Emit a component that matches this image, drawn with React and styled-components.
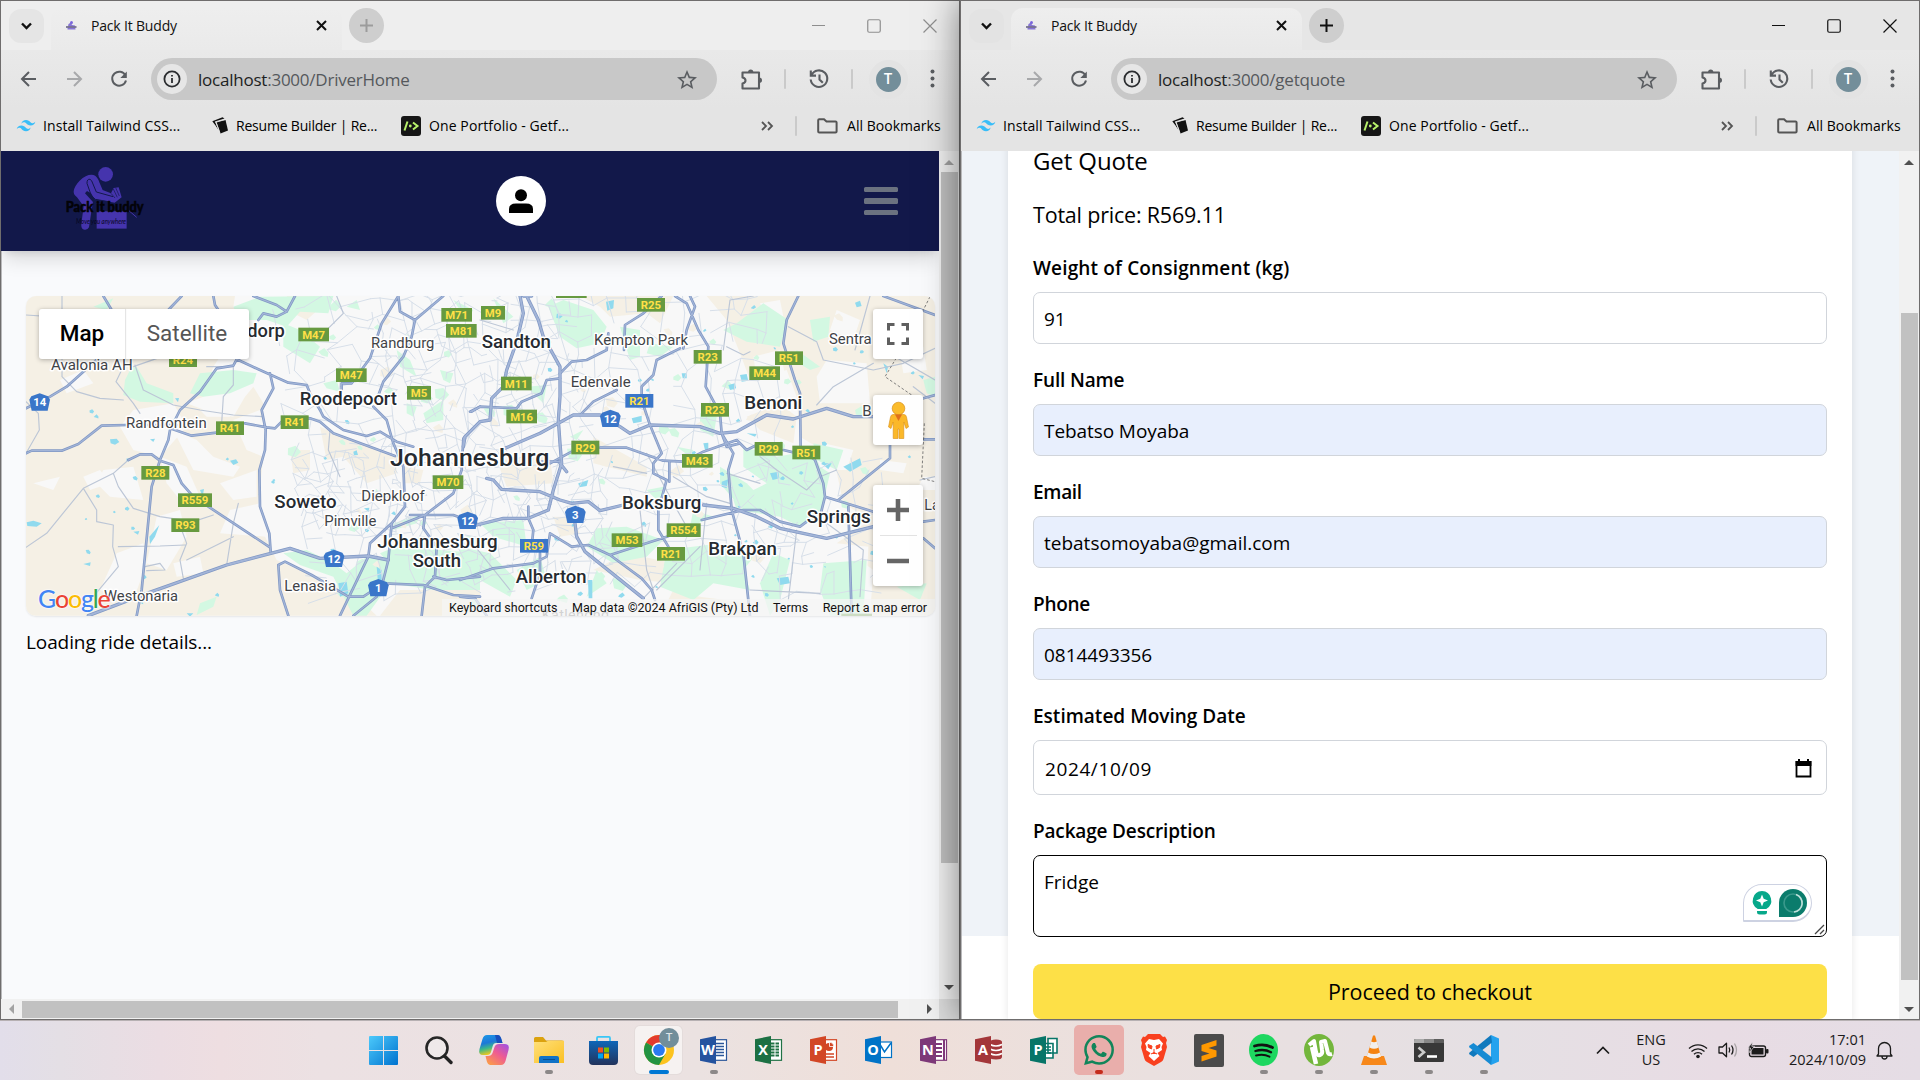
import React from "react";
import styled, { createGlobalStyle, css } from "styled-components";

const UI = `"Open Sans", "Noto Sans", sans-serif`;
const ROBOTO = `Roboto, "Liberation Sans", sans-serif`;

const GlobalStyle = createGlobalStyle`
  *, *::before, *::after { box-sizing: border-box; }
  body { margin: 0; background: #e6dfe2; font-family: ${UI}; color: #000; overflow: hidden; }
  h1, p { margin: 0; }
  svg { display: block; flex: none; overflow: visible; }
`;

/* ---------- desktop ---------- */
const Desktop = styled.div`
  width: 1920px; height: 1080px; display: flex; flex-direction: column; overflow: hidden;
`;
const Windows = styled.div`
  display: flex; height: 1020px; overflow: hidden;
`;
const WindowFrame = styled.section`
  position: relative;
  z-index: ${(p) => (p.$active ? 2 : 1)};
  width: 960px; height: 1020px;
  display: flex; flex-direction: column;
  border: 1px solid #6f6d6d;
  background: #e5e5e5;
  box-shadow: ${(p) => (p.$active ? "0 0 34px rgba(0,0,0,.5)" : "none")};
`;
const TabStrip = styled.div`
  display: flex; align-items: center; height: 49px; flex: none;
  padding: 0 22px 0 8px;
  background: ${(p) => (p.$active ? "#e6e6e6" : "#eeeeee")};
`;
const TabSearch = styled.div`
  width: 35px; height: 34px; border-radius: 12px; margin-right: 7px;
  display: flex; align-items: center; justify-content: center;
  background: ${(p) => (p.$active ? "#e3e3e3" : "#e5e5e5")};
`;
const Tab = styled.div`
  align-self: flex-end; width: 291px; height: 42px; padding: 0 15px 8px 15px;
  display: flex; align-items: center; border-radius: 12px 12px 0 0;
  background: ${(p) => (p.$active ? "linear-gradient(#eeeeee,#e9e9e9)" : "linear-gradient(#eeeeee,#eaeaea)")};
`;
const TabTitle = styled.span`
  flex: 1; margin-left: 14px; padding-top: 1px; font-size: 14px; letter-spacing: -0.18px; line-height: 20px; color: #111;
`;
const NewTab = styled.div`
  width: 35px; height: 35px; border-radius: 50%; margin-left: 7px;
  display: flex; align-items: center; justify-content: center;
  background: #cecece; color: ${(p) => (p.$active ? "#111" : "#9c9c9c")};
`;
const Controls = styled.div`
  margin-left: auto; display: flex; align-items: center; gap: 42px;
  color: ${(p) => (p.$active ? "#111" : "#8e8e8e")};
`;
const Toolbar = styled.div`
  display: flex; align-items: center; height: 58px; flex: none; padding: 0 18px 0 16px;
  background: linear-gradient(#e9e9e9, #e4e4e4); color: #5a5d61;
`;
const NavButtons = styled.div`
  display: flex; gap: 21px; margin-right: 20px;
`;
const AddressBar = styled.div`
  width: 566px; height: 42px; border-radius: 21px; background: #c8c8c8;
  display: flex; align-items: center; padding: 0 20px 0 6px;
`;
const SiteInfo = styled.div`
  width: 30px; height: 30px; border-radius: 50%; background: #e6e6e6;
  display: flex; align-items: center; justify-content: center; margin-right: 11px;
`;
const Url = styled.span`
  flex: 1; padding-top: 2px; font-size: 17px; line-height: 26px; letter-spacing: -0.23px; color: #55585c;
  b { font-weight: 400; color: #1d1f22; }
`;
const Divider = styled.span`
  width: 2px; height: 20px; border-radius: 1px; background: #cacaca; flex: none;
`;
const ToolGroup = styled.div`
  flex: 1; display: flex; align-items: center; justify-content: space-between; padding-left: 24px;
`;
const Profile = styled.span`
  width: 25px; height: 25px; border-radius: 50%; background: #738e9a; color: #fff;
  box-shadow: 0 0 0 7px #e3e3e3; font: 500 14px/25px ${ROBOTO}; text-align: center;
`;
const BookmarkBar = styled.div`
  display: flex; align-items: center; height: 43px; flex: none; padding: 0 16px 8px 15px; background: #e4e4e4;
  font-size: 14px; line-height: 20px; color: #000;
`;
const Bookmark = styled.span`
  display: flex; align-items: center; gap: ${(p) => p.$gap || 8}px; width: ${(p) => p.$w}px; white-space: nowrap;
  letter-spacing: ${(p) => p.$ls || "-0.2px"};
`;
const BookmarkEnd = styled.div`
  margin-left: auto; display: flex; align-items: center;
`;
const Spacer = styled.span`width: ${(p) => p.$w}px; flex: none;`;
const Viewport = styled.div`
  flex: 1; min-height: 0; display: grid; grid-template-columns: minmax(0, 1fr) 20px;
  grid-template-rows: ${(p) => (p.$both ? "minmax(0, 1fr) 20px" : "minmax(0, 1fr)")};
`;

/* ---------- scrollbars ---------- */
const VTrack = styled.div`
  background: #f1f1f1; display: flex; flex-direction: column; align-items: center;
  padding: 9px 0 ${(p) => p.$pb}px; justify-content: space-between;
`;
const VRail = styled.div`flex: 1; width: 17px; margin: ${(p) => p.$top}px 0 0 1px;`;
const VThumb = styled.div`height: ${(p) => p.$h}px; background: #c1c1c1;`;
const HTrack = styled.div`
  background: #f1f1f1; display: flex; align-items: center; padding: 0 7px 0 8px;
`;
const HRail = styled.div`flex: 1; height: 17px; margin-left: 8px;`;
const HThumb = styled.div`width: 876px; height: 17px; background: #c1c1c1;`;
const Corner = styled.div`background: #dcdcdc;`;
const Arrow = styled.i`
  width: 0; height: 0; border: 5px solid transparent; flex: none;
  ${(p) => p.$dir === "up" && css`border-top: 0; border-bottom-color: ${p.$c};`}
  ${(p) => p.$dir === "down" && css`border-bottom: 0; border-top-color: ${p.$c};`}
  ${(p) => p.$dir === "left" && css`border-left: 0; border-right-color: ${p.$c};`}
  ${(p) => p.$dir === "right" && css`border-right: 0; border-left-color: ${p.$c};`}
`;

/* ---------- driver page ---------- */
const DriverPage = styled.main`
  background: #f9fafc; overflow: hidden; display: flex; flex-direction: column;
`;
const Navbar = styled.header`
  height: 100px; flex: none; background: #12184a; padding: 0 41px 0 62px;
  display: flex; align-items: center; justify-content: space-between;
  box-shadow: 0 12px 18px -3px rgba(0,0,0,.12), 0 5px 8px -4px rgba(0,0,0,.12);
`;
const LogoLink = styled.div`width: 115px; padding-bottom: 6px;`;
const UserBadge = styled.div`
  width: 50px; height: 50px; border-radius: 50%; background: #fff; display: flex; align-items: center; justify-content: center;
`;
const Burger = styled.div`
  width: 34px; display: flex; flex-direction: column; gap: 6px;
  span { height: 5.6px; border-radius: 1.5px; background: #6b7280; }
`;
const DriverBody = styled.div`flex: 1; border-left: 1px solid #b9b9bb; padding: 45px 3px 0 24px;`;
const MapCard = styled.div`
  position: relative; width: 909px; height: 320px; border-radius: 10px; overflow: hidden; background: #f8f8f8;
  font-family: ${ROBOTO}; box-shadow: 0 1px 2px rgba(0,0,0,.08);
`;
const MapType = styled.div`
  position: absolute; left: 13px; top: 13px; height: 50px; display: flex; background: #fff; border-radius: 3px;
  box-shadow: 0 1px 5px rgba(0,0,0,.28); font-size: 22.5px; line-height: 49px; text-align: center;
`;
const MapTypeItem = styled.span`
  width: ${(p) => (p.$on ? 86 : 124)}px; color: ${(p) => (p.$on ? "#000" : "#565656")};
  font-weight: ${(p) => (p.$on ? 500 : 400)};
  box-shadow: ${(p) => (p.$on ? "1px 0 1px rgba(0,0,0,.1)" : "none")};
`;
const MapButton = styled.div`
  position: absolute; left: 847px; top: ${(p) => p.$top}px; width: 50px; height: ${(p) => p.$h || 50}px; background: #fff;
  border-radius: 3px; box-shadow: 0 1px 5px rgba(0,0,0,.28); display: flex; flex-direction: column; align-items: center; justify-content: space-evenly;
`;
const Rule = styled.span`width: 37px; height: 1px; background: #e3e3e3;`;
const GoogleMark = styled.div`
  position: absolute; left: 12px; top: 285px; font: 500 25px/34px Lato, sans-serif; letter-spacing: -1.2px;
  text-shadow: 0 0 2px #fff, 0 0 2px #fff;
`;
const Ink = styled.span`color: ${(p) => p.$c};`;
const Attribution = styled.div`
  position: absolute; right: 0; bottom: 0; height: 17px; width: 493px; padding: 0 8px 0 7px;
  display: flex; justify-content: space-between; background: rgba(245,245,245,.72);
  font-size: 12.5px; line-height: 18px; color: #111; white-space: nowrap;
`;
const Loading = styled.p`
  margin-top: 12px; font-size: 19px; line-height: 28px; letter-spacing: -0.1px;
`;

/* ---------- quote page ---------- */
const QuotePage = styled.main`
  border-left: 1px solid #b9b9bb; overflow: hidden; padding: 0 47px 0 46px;
  background: linear-gradient(#eff3f8 0 785px, #fff 785px);
`;
const Card = styled.form`
  height: 880px; margin: -10px 0 0; padding: 0 25px; background: #fff; box-shadow: 0 0 8px rgba(0,0,0,.1);
`;
const Title = styled.h1`font-size: 24px; line-height: 40px; font-weight: 400; letter-spacing: -0.1px;`;
const Price = styled.p`margin: 19px 0 23px; font-size: 21.5px; line-height: 30px; letter-spacing: -0.2px;`;
const Label = styled.label`
  display: block; margin: 0 0 9px; font-size: 19px; line-height: 30px; font-weight: 600; letter-spacing: ${(p) => p.$ls || "-0.3px"};
`;
const Field = styled.div`
  position: relative; height: ${(p) => p.$h || 52}px; margin-bottom: ${(p) => p.$mb || 21}px; padding: ${(p) => (p.$area ? 11 : 12)}px 10px 10px ${(p) => p.$pl || 10}px;
  display: flex; justify-content: space-between; align-items: ${(p) => (p.$area ? "flex-start" : "center")};
  border: 1px solid ${(p) => (p.$area ? "#000" : "#d1d5db")}; border-radius: 7px; background: ${(p) => (p.$filled ? "#e8effd" : "#fff")};
  font-size: 19px; line-height: 30px; letter-spacing: ${(p) => p.$ls || "0"};
`;
const Checkout = styled.div`
  height: 55px; border-radius: 8px; background: #fde047; text-align: center; font-size: 21.5px; line-height: 55px; letter-spacing: -0.05px;
`;
const Assistant = styled.div`
  position: absolute; right: 14px; top: 28px; width: 69px; height: 38px; border: 1px solid #cdd2e2; border-bottom-width: 2px;
  border-radius: 19px 19px 19px 1px; background: #fff; display: flex; align-items: center; justify-content: space-between; padding: 0 4px 0 8px;
`;
const Grip = styled.div`position: absolute; right: 1px; bottom: 1px;`;

/* ---------- taskbar ---------- */
const Taskbar = styled.footer`
  position: relative; z-index: 3; height: 60px; display: flex; align-items: center; border-top: 1px solid #b7b1b3; padding-bottom: 1px;
  background: linear-gradient(90deg, #e2deea 0, #e4dfe5 60px, #ebdde3 160px, #eedee1 220px, #ece1e3 320px, #ebe2e1 700px, #efdfd9 890px, #eae0df 1150px, #e5e0e4 1500px, #e8dce4 1720px, #e5dde5 1920px);
`;
const Apps = styled.div`margin-left: 356px; display: flex;`;
const Slot = styled.div`
  width: 55px; height: 50px; display: flex; align-items: center; justify-content: center; position: relative;
`;
const Tile = styled.div`
  width: ${(p) => (p.$alert ? 50 : 47)}px; height: ${(p) => (p.$alert ? 50 : 48)}px; border-radius: 5px;
  display: flex; align-items: center; justify-content: center;
  background: ${(p) => (p.$alert ? "#e9aeab" : "#f6f2f1")};
  box-shadow: ${(p) => (p.$alert ? "none" : "0 0 0 1px #e4dcdb")};
`;
const Running = styled.i`
  position: absolute; bottom: 1px; height: 4px; border-radius: 2px; width: ${(p) => p.$w || 8}px; background: ${(p) => p.$c || "#8c8888"};
`;
const Badge = styled.span`
  position: absolute; left: 28px; top: 3px; width: 20px; height: 20px; border-radius: 50%; background: #728e9a; color: #dfe6e9;
  font: 500 11px/20px ${ROBOTO}; text-align: center;
`;
const Tray = styled.div`
  margin-left: auto; display: flex; align-items: center; padding-right: 27px; font-size: 14.5px; line-height: 20px; color: #1b1b1b;
`;
const TrayText = styled.div`
  width: ${(p) => p.$w}px; margin-left: ${(p) => p.$ml || 0}px; text-align: ${(p) => p.$align}; letter-spacing: ${(p) => p.$ls}; white-space: nowrap;
`;

/* ---------- icons ---------- */
const S = ({ w, h, vb, children, ...rest }) => (
  <svg width={w} height={h ?? w} viewBox={vb ?? `0 0 ${w} ${h ?? w}`} fill="none" {...rest}>{children}</svg>
);
const line = { stroke: "currentColor", strokeWidth: 2, fill: "none" };

const Favicon = () => (
  <S w={11} h={10} vb="0 -1.500 11 10"><path d="M1.500 7 2.500 2.500 5 1 6 3.500 9 4 9.500 8 1.500 8Z" fill="#8674d6" /><path d="M0 4.600H10.500V6.400H0Z" fill="#77728f" /><circle cx="5.500" cy="1" r="1.500" fill="#7a66dd" /></S>
);
const TailwindIcon = () => (
  <S w={20} h={13} vb="0 3.6 24 16.8"><path fill="#38bdf8" d="M12 4.8c-3.2 0-5.2 1.6-6 4.8 1.2-1.6 2.6-2.2 4.2-1.8.9.2 1.6.9 2.3 1.7 1.2 1.2 2.6 2.6 5.5 2.6 3.2 0 5.2-1.6 6-4.8-1.2 1.6-2.6 2.2-4.2 1.8-.9-.2-1.6-.9-2.3-1.7C16.300 6.200 14.900 4.800 12 4.800ZM6 12c-3.200 0-5.200 1.600-6 4.800 1.200-1.600 2.600-2.200 4.200-1.800.9.200 1.600.9 2.300 1.700 1.200 1.200 2.600 2.600 5.500 2.600 3.200 0 5.200-1.600 6-4.800-1.200 1.600-2.600 2.200-4.200 1.800-.9-.2-1.600-.9-2.300-1.700C10.300 13.400 8.900 12 6 12Z" /></S>
);
const ResumeIcon = () => (
  <S w={16} h={17}><path d="M4.500 5 13.500 3 16 13.500 8.500 16.500Z" fill="#111" /><path d="M0.300 4.200 10.500 0.300 12.500 1.500 3 4.600 6.500 13 3.500 8.500Z" fill="#111" /><path d="M3.700 5.300 13 2.600M3.700 4.800 7.800 15.500" stroke="#e4e4e4" strokeWidth=".8" /></S>
);
const PortfolioIcon = () => (
  <S w={20}><rect width="20" height="20" rx="3" fill="#161616" /><path d="M6.500 5.500 3.500 14.500" stroke="#b9f36b" strokeWidth="2" /><circle cx="9.300" cy="10" r="1.400" fill="#b9f36b" /><path d="M12 6.500 16.500 10 12 13.500" stroke="#b9f36b" strokeWidth="2" /></S>
);
const PuzzleIcon = () => (
  <S w={21} h={21}><path {...line} strokeWidth="2.100" strokeLinejoin="round" d="M1.500 3.500H18V19.500H1.500V14.500C5.500 13.500 5.500 9.500 1.500 8.500Z" /><path d="M7 3.500a2.700 3 0 0 1 5.400 0ZM18 8.600a3 2.700 0 0 1 0 5.400Z" fill="currentColor" /></S>
);
const HistoryIcon = () => (
  <S w={20}><path {...line} strokeWidth="2.100" d="M2.500 6A8.300 8.300 0 1 1 1.700 10.500M1.800 1.500V6.600H7M10.500 5.500V10.500L13.800 13.800" /></S>
);
const StarIcon = () => (
  <S w={20} h={19} vb="2 2 20 19"><path fill="currentColor" d="M22 9.240l-7.190-.62L12 2 9.190 8.630 2 9.240l5.460 4.730L5.820 21 12 17.270 18.180 21l-1.630-7.030L22 9.240zM12 15.400l-3.760 2.270 1-4.280-3.320-2.880 4.380-.38L12 6.100l1.710 4.040 4.380.38-3.320 2.880 1 4.280L12 15.400z" /></S>
);
const FolderIcon = () => (
  <S w={21} h={16}><path d="M1.200 13.500V2.200Q1.200 1.200 2.200 1.200H7L9.500 3.500H18.500Q19.600 3.500 19.600 4.500V13.500Q19.600 14.600 18.500 14.600H2.300Q1.200 14.600 1.200 13.500Z" stroke="#555" strokeWidth="2" /></S>
);

const PackLogo = () => (
  <S w={83.300} h={68.300} vb="190 490 250 205">
    <g fill="#4534ad">
      <circle cx="318" cy="521" r="22" />
      <path d="M222 572Q224 556 240 540Q262 519 282 523Q294 528 299 545L309 568L334 578L342 562L357 560L366 590L345 606L322 602L285 596L274 578L262 571L256 578L280 604L274 640L268 680Q264 688 255 687Q243 686 245 670L252 617L232 590Q221 582 222 572Z" />
      <path d="M291 632H381V684H291Z" />
      <path d="M388 630 411 650" stroke="#4534ad" strokeWidth="3" />
    </g>
    <path d="M262 548Q262 534 271 536Q276 537 280 550L290 574L340 588M262 548L275 585L287 596L326 603" stroke="#12184a" strokeWidth="3" />
    <path d="M334 578 346 592M341 565 353 590M348 561 359 586" stroke="#12184a" strokeWidth="2" />
    <text x="198" y="634" fontFamily="Lato, sans-serif" fontWeight="900" fontSize="43" textLength="234" lengthAdjust="spacingAndGlyphs" fill="#030308" stroke="#030308" strokeWidth="1.500">Pack it buddy</text>
    <text x="229" y="669" fontFamily="Lato, sans-serif" fontStyle="italic" fontSize="20" textLength="150" lengthAdjust="spacingAndGlyphs" fill="#05061a">Move you anywhere</text>
  </S>
);

const Office = ({ c, dark, letter, kind }) => (
  <S w={27} h={28}>
    {kind === "mail" ? (
      <><rect x="13" y="6" width="13.500" height="15.500" fill="#fff" stroke={c} strokeWidth="1.200" /><path d="M15 8.500 19.500 16 26 7" stroke={c} strokeWidth="1.500" /></>
    ) : kind === "db" ? (
      <path d="M15 6q0-2.500 6-2.500t6 2.500V21q0 2.500-6 2.500T15 21Z" fill={c} />
    ) : kind === "pub" ? (
      <><path d="M18 2.500H27V17H18ZM14 7.500H23V22H14Z" fill="#fff" stroke={c} strokeWidth="1.600" /></>
    ) : (
      <rect x="12" y="3.700" width="14.500" height="20.600" fill="#fff" stroke={c} strokeWidth="1.200" />
    )}
    {kind === "lines" && <path d="M16 7.500h8M16 10.500h8M16 13.500h8M16 16.500h8M16 19.500h8" stroke={c} strokeWidth="1.500" />}
    {kind === "grid" && <path d="M16 7.500h8M16 10.500h8M16 13.500h8M16 16.500h8M16 19.500h8" stroke={c} strokeWidth="2" />}
    {kind === "grid" && <path d="M20 5v18" stroke="#fff" strokeWidth="1" />}
    {kind === "pie" && <><circle cx="19" cy="11" r="4" fill={c} /><path d="M19.500 10.500V6a5 5 0 0 1 4.500 4.500Z" fill={c} stroke="#fff" strokeWidth=".8" /><path d="M16 18h8M16 21h8" stroke={c} strokeWidth="1.400" /></>}
    {kind === "note" && <path d="M16 8h6M16 12h6M16 16h6M16 20h6M24 4v20" stroke={c} strokeWidth="2" />}
    {kind === "db" && <path d="M15 8.500q6 3 12 0M15 13q6 3 12 0M15 17.500q6 3 12 0" stroke="#fff" strokeWidth="1.500" />}
    {kind === "pub" && <path d="M16 11h5M16 14h5M16 17h5" stroke={c} strokeWidth="1.300" />}
    <path d="M0 3.200 16 0V28L0 24.800Z" fill={dark} />
    <text x="8" y="19.300" textAnchor="middle" fontFamily="Open Sans, sans-serif" fontWeight="700" fontSize="14.500" fill="#fff">{letter}</text>
  </S>
);

const WindowsIcon = () => (
  <S w={29}><defs><linearGradient id="win" x1="0" y1="0" x2="1" y2="1"><stop offset="0" stopColor="#4cc9fb" /><stop offset="1" stopColor="#0072cf" /></linearGradient></defs>
    <path d="M1 0H14V14H0V1Q0 0 1 0ZM15 0H28Q29 0 29 1V14H15ZM0 15H14V29H1Q0 29 0 28ZM15 15H29V28Q29 29 28 29H15Z" fill="url(#win)" /></S>
);
const SearchIcon = () => (
  <S w={28}><circle cx="12" cy="12" r="10.500" fill="#f1eeee" fillOpacity=".6" stroke="#262626" strokeWidth="2.600" /><path d="M19.500 20 26 26.500" stroke="#222" strokeWidth="3.400" strokeLinecap="round" /></S>
);
const CopilotIcon = () => (
  <S w={30} h={30}><defs>
    <linearGradient id="cpa" x1="0" y1="0" x2="0.300" y2="1"><stop offset="0" stopColor="#1d9be8" /><stop offset=".45" stopColor="#1c78d8" /><stop offset=".7" stopColor="#3bb88a" /><stop offset="1" stopColor="#f2c81c" /></linearGradient>
    <linearGradient id="cpb" x1="1" y1="0" x2="0.200" y2="1"><stop offset="0" stopColor="#9a52e8" /><stop offset=".5" stopColor="#ee5b93" /><stop offset="1" stopColor="#fb9b4a" /></linearGradient></defs>
    <path d="M8 0H19Q21 0 22 3L23.500 8H17Q14.500 8 13.700 11L12 17Q11 20 8 20H4Q-1 20 0.500 14L3.500 4Q4.700 0 8 0Z" fill="url(#cpa)" />
    <path d="M16 0H19Q21 0 22 3L23.500 8H18Z" fill="#184fbd" />
    <path d="M22 30H11Q9 30 8 27L6.500 21H9Q12.500 21 13.500 18L15.500 12Q16.500 9 20 9H26Q31 9 29.500 15L26.500 26Q25.300 30 22 30Z" fill="url(#cpb)" /></S>
);
const ExplorerIcon = () => (
  <S w={30} h={27}><path d="M1.500 0H9L12 3.500H28Q30 3.500 30 5V12H0V1.500Q0 0 1.500 0Z" fill="#dba20f" /><defs><linearGradient id="fold" x1="0" y1="0" x2="1" y2="1"><stop offset="0" stopColor="#ffe07a" /><stop offset="1" stopColor="#fbc023" /></linearGradient></defs><path d="M0 5H12L14 3.700H30V26H0Z" fill="url(#fold)" /><path d="M5 26V21Q5 19 7 19H23Q25 19 25 21V26Z" fill="#1173c7" /><path d="M9 22.500H21" stroke="#0a4f91" strokeWidth="1" /></S>
);
const StoreIcon = () => (
  <S w={29}><path d="M8 6V2Q8 .8 9 .8H20Q21 .8 21 2V6" stroke="#3ac6f6" strokeWidth="1.800" /><defs><linearGradient id="sto" x1="0" y1="0" x2="0" y2="1"><stop offset="0" stopColor="#0f66b8" /><stop offset="1" stopColor="#22335c" /></linearGradient></defs><path d="M0 5H29V25Q29 29 25 29H4Q0 29 0 25Z" fill="url(#sto)" /><path d="M9 11.500h5v5H9Z" fill="#f25022" /><path d="M15 11.500h5v5h-5Z" fill="#7fba00" /><path d="M9 17.500h5v5H9Z" fill="#00a4ef" /><path d="M15 17.500h5v5h-5Z" fill="#ffb900" /></S>
);
const ChromeIcon = () => (
  <S w={30} vb="0 0 30 30"><circle cx="15" cy="15" r="15" fill="#fcc31e" /><path d="M15 15 2 7.500A15 15 0 0 1 28 7.500H15Z" fill="#e33b2e" /><path d="M15 15 2 7.500A15 15 0 0 0 15 30L21.500 18.700Z" fill="#229342" /><circle cx="15" cy="15" r="7.500" fill="#fff" /><circle cx="15" cy="15" r="5.900" fill="#2a7af0" /></S>
);
const WhatsAppIcon = () => (
  <S w={30} vb="0 0 24 24"><path fill="#12855a" d="M17.472 14.382c-.297-.149-1.758-.867-2.030-.967-.273-.099-.471-.148-.67.150-.197.297-.767.966-.940 1.164-.173.199-.347.223-.644.075-.297-.150-1.255-.463-2.390-1.475-.883-.788-1.480-1.761-1.653-2.059-.173-.297-.018-.458.130-.606.134-.133.298-.347.446-.520.149-.174.198-.298.298-.497.099-.198.050-.371-.025-.520-.075-.149-.669-1.612-.916-2.207-.242-.579-.487-.500-.669-.510-.173-.008-.371-.010-.570-.010-.198 0-.520.074-.792.372-.272.297-1.040 1.016-1.040 2.479 0 1.462 1.065 2.875 1.213 3.074.149.198 2.096 3.200 5.077 4.487.709.306 1.262.489 1.694.625.712.227 1.360.195 1.871.118.571-.085 1.758-.719 2.006-1.413.248-.694.248-1.289.173-1.413-.074-.124-.272-.198-.570-.347m-5.421 7.403h-.004a9.870 9.870 0 01-5.031-1.378l-.361-.214-3.741.982.998-3.648-.235-.374a9.860 9.860 0 01-1.510-5.260c.001-5.450 4.436-9.884 9.888-9.884 2.640 0 5.122 1.030 6.988 2.898a9.825 9.825 0 012.893 6.994c-.003 5.450-4.437 9.884-9.885 9.884m8.413-18.297A11.815 11.815 0 0012.050 0C5.495 0 .160 5.335.157 11.892c0 2.096.547 4.142 1.588 5.945L.057 24l6.305-1.654a11.882 11.882 0 005.683 1.448h.005c6.554 0 11.890-5.335 11.893-11.893a11.821 11.821 0 00-3.480-8.413z" /></S>
);
const BraveIcon = () => (
  <S w={26} h={32}><path d="M7 0H19L22 3L24 2.500L26 6L25 9L26 13L22.500 25Q22 27 20 28L13 32L6 28Q4 27 3.500 25L0 13L1 9L0 6L2 2.500L4 3Z" fill="#f9401f" /><path d="M13 6 18 5 22 9.500 20.500 13 21 16 16.500 19 18.500 22 13 27 7.500 22 9.500 19 5 16 5.500 13 4 9.500 8 5Z" fill="#fff" /><path d="M7 10.500 11 12 10.500 15 7.500 13.500ZM19 10.500 15 12 15.500 15 18.500 13.500ZM13 15V19M10 20 13 18.500 16 20" fill="#f9401f" stroke="#f9401f" strokeWidth="1" /></S>
);
const SublimeIcon = () => (
  <S w={30} h={33}><rect width="30" height="33" rx="2" fill="#4b4b4b" /><path d="M7.500 11 22.500 6V11.500L14.500 14 22.500 16.500V22.500L7.500 27.500V22L15.500 19.500 7.500 17Z" fill="#ff9800" /></S>
);
const SpotifyIcon = () => (
  <S w={29} h={32}><ellipse cx="14.500" cy="16" rx="14.500" ry="16" fill="#1ed760" /><path d="M5.500 12Q15 9 23.500 13.500" stroke="#111" strokeWidth="2.800" strokeLinecap="round" /><path d="M6.500 17Q15 14.500 22 18.300" stroke="#111" strokeWidth="2.300" strokeLinecap="round" /><path d="M7 21.500Q14.500 19.400 20.500 22.700" stroke="#111" strokeWidth="1.900" strokeLinecap="round" /></S>
);
const TorrentIcon = () => (
  <S w={30} h={32}><ellipse cx="15" cy="16" rx="15" ry="16" fill="#73b63c" /><path d="M5 11 10 7 12 18Q13 22 16 21 19 20 18 16L17 8 21 7 24 19Q25 21 28 20" stroke="#fff" strokeWidth="4" strokeLinejoin="round" /><path d="M8 13 12 30" stroke="#fff" strokeWidth="4.500" /></S>
);
const VlcIcon = () => (
  <S w={26} h={30}><path d="M3 21H23L26 30H0Z" fill="#f7881a" /><path d="M12 0.500H14L20.500 23Q13 27 5.500 23Z" fill="#f58311" /><path d="M10.200 6.500Q13 8 15.800 6.500L17.600 12.500Q13 15 8.500 12.500ZM7 17.500Q13 20.500 19 17.500L20.200 21.500Q13 25.500 5.800 21.500Z" fill="#f2efec" /></S>
);
const TerminalIcon = () => (
  <S w={30} h={23}><rect width="30" height="23" rx="1.500" fill="#383838" /><path d="M0 1.500Q0 0 1.500 0H10V4H0Z" fill="#aaa" /><path d="M10 0H20V4H10Z" fill="#888" /><path d="M20 0H28.500Q30 0 30 1.500V4H20Z" fill="#5c5c5c" /><path d="M4.500 8.500 10 13.200 4.500 18" stroke="#ccc" strokeWidth="2.600" /><path d="M13 17.500H23" stroke="#fff" strokeWidth="2.600" /></S>
);
const VsCodeIcon = () => (
  <S w={30}><path d="M22 0 30 3.500V26.500L22 30Z" fill="#24a2ee" /><path d="M22 0 23 7.500 4.500 22 0 19 .5 17.500Z" fill="#1079bd" /><path d="M22 30 23 22.500 4.500 8 0 11 .5 12.500Z" fill="#178bd3" /></S>
);

/* ---------- map ---------- */
const rnd = (seed) => () => {
  seed = (seed * 1664525 + 1013904223) % 4294967296;
  return seed / 4294967296;
};
function streetMesh(x0, y0, x1, y1, step, seed, keep) {
  const r = rnd(seed);
  const nx = Math.floor((x1 - x0) / step);
  const ny = Math.floor((y1 - y0) / step);
  const pts = Array.from({ length: ny + 1 }, (_, j) =>
    Array.from({ length: nx + 1 }, (_, i) => [
      Math.round(x0 + i * step + (r() - 0.5) * step * 0.9 + j * 6),
      Math.round(y0 + j * step + (r() - 0.5) * step * 0.9 - i * 3),
    ])
  );
  let d = "";
  for (let j = 0; j <= ny; j++)
    for (let i = 0; i <= nx; i++) {
      const [a, b] = pts[j][i];
      if (i < nx && r() < keep) d += `M${a} ${b}L${pts[j][i + 1].join(" ")}`;
      if (j < ny && r() < keep) d += `M${a} ${b}L${pts[j + 1][i].join(" ")}`;
    }
  return d;
}
function specks(x0, y0, x1, y1, n, seed, size) {
  const r = rnd(seed);
  return Array.from({ length: n }, () => {
    const x = x0 + r() * (x1 - x0);
    const y = y0 + r() * (y1 - y0);
    const s = size * (0.5 + r());
    return `M${x} ${y}l${s} ${-s * r()}l${s * 0.7} ${s * 0.8}l${-s * r()} ${s * 0.7}l${-s} ${-s * 0.3}Z`;
  }).join("");
}

const landL = [
  "78,78 705,78 700,110 735,150 700,200 640,290 610,380 560,400 640,430 700,440 735,380 760,350 790,400 780,480 790,560 775,700 740,760 790,790 830,870 900,900 1050,960 1130,1037 78,1037",
  "960,470 1030,500 1190,560 1190,610 1100,640 1030,560 980,570",
  "860,78 1000,78 920,150 880,130", "1140,1037 1200,960 1440,960 1440,1037",
  "1210,590 1270,600 1260,640 1210,640", "870,540 930,540 930,600 880,610",
];
const landR = [
  "360,78 640,78 600,160 560,130 450,140 420,110", "740,78 1425,78 1425,1037 1230,1037 1240,900 1130,820 1230,750 1150,700 1120,560 1020,500 1010,380 980,300 870,330 840,250 800,150",
  "110,570 270,560 280,640 140,650", "400,500 560,590 560,620 400,580", "500,850 640,880 640,940 540,930 400,900", "280,740 330,740 360,790 300,800",
  "860,440 960,400 1010,440 1000,520 900,480", "720,980 870,1000 860,1037 600,1037 640,960",
];
const townL = [
  "400,420 520,400 560,470 480,560 400,540 360,470", "310,600 400,590 430,690 330,680 290,640", "520,480 590,510 640,560 720,590 700,620 580,600", "660,640 770,600 770,680 700,690",
  "480,560 560,590 600,680 540,690 500,640", "700,450 780,420 790,560 740,540", "250,620 300,600 330,640 270,660", "350,850 430,820 440,880 400,990 300,960", "470,740 540,720 560,800 500,900 440,880",
  "690,720 780,700 800,800 660,790", "520,880 600,860 610,910 530,920", "180,330 250,300 280,340 200,370", "100,640 180,620 160,660", "600,420 680,400 690,440 620,440",
];
const townR = [
  "1130,120 1200,150 1180,210 1110,180", "1100,270 1220,280 1230,400 1080,400 1070,320", "1130,820 1225,830 1220,940 1120,940", "1090,520 1180,540 1160,600 1100,600", "900,100 960,90 970,140 920,140", "880,260 960,240 980,340 900,380",
  "1260,570 1340,580 1330,610 1260,600", "1290,900 1360,880 1370,930 1300,940", "1320,250 1390,230 1400,300 1330,310", "1390,620 1425,620 1425,660 1370,660",
];
const greenL = [
  "395,290 410,290 440,340 520,370 520,400 420,395 370,375 375,330", "570,370 600,310 700,300 770,310 760,340 690,370 610,380", "700,110 780,80 1000,78 985,130 900,125 860,170 800,150 720,150", "850,160 900,180 960,230 930,280 850,230",
  "280,110 340,85 320,120", "970,340 1010,330 1020,365 980,355", "1190,240 1230,270 1250,320 1200,290", "1320,300 1360,310 1350,340 1330,330", "1270,430 1330,390 1330,450 1280,460", "1220,400 1250,410 1240,440 1220,430",
  "850,850 920,840 1000,880 1040,910 1100,860 1165,870 1200,830 1440,850 1440,960 1300,960 1170,940 1100,1037 1060,1037 1000,920 900,885", "1180,760 1260,735 1250,760 1180,780", "600,1000 650,980 640,1010 590,1035", "1110,670 1170,665 1160,690 1110,690", "1360,90 1420,120 1400,150", "1140,850 1260,800 1320,880 1200,920", "1040,110 1070,90 1080,120",
];
const greenR = [
  "265,110 310,90 400,120 440,170 420,220 350,235 300,200", "790,180 830,160 910,100 985,150 960,230 860,215", "1050,150 1110,140 1105,200 1060,215", "570,220 640,230 600,260 560,250", "1010,240 1080,290 1050,300 1000,270", "100,85 160,140 130,160", "480,170 540,180 540,260 510,270",
  "330,500 370,480 350,510", "850,530 950,560 1060,540 1080,590 1110,610 1080,740 1020,770 960,740 830,720 820,690 920,640 850,590", "720,430 770,440 760,500 720,480", "1390,330 1425,320 1425,380 1400,370", "1060,520 1150,540 1130,600 1070,570", "780,590 860,640 900,680 830,700 780,640",
  "410,775 500,770 610,810 560,860 460,880 380,830", "620,840 740,825 890,850 850,900 870,960 760,940 700,990 600,950", "0,830 90,850 170,930 150,980 60,930 0,930", "60,760 190,750 200,830 100,800", "1090,880 1220,870 1210,1037 1110,1037 1080,960", "940,850 990,870 960,990 930,1037 900,940",
  "170,900 240,860 260,930 200,960", "650,530 700,540 690,560", "560,660 610,650 600,700", "410,900 440,940 380,980", "1000,690 1050,660 1080,700 1040,740", "700,720 760,740 690,770", "1310,950 1400,940 1380,990", "200,350 260,345 250,400",
];
const waterL = [
  "80,757 100,752 125,760 110,770 82,768", "330,508 350,506 358,516 345,524 332,520", "690,572 708,568 715,578 700,585", "1060,545 1070,541 1074,555 1062,556", "1015,940 1040,935 1045,970 1020,980", "448,800 478,765 465,800 450,822", "250,882 272,877 270,888", "525,385 537,384 534,397", "450,508 465,506 460,516", "1092,715 1108,713 1106,726", "1130,890 1145,900 1150,940 1135,950", "600,660 612,657 608,680", "400,785 418,783 414,794", "1235,570 1270,575 1255,590", "560,1030 580,1030 570,1040",
];
const waterR = [
  "438,95 462,90 460,115 442,122", "1185,98 1200,92 1205,108 1190,112", "840,315 860,312 865,332 845,335", "805,345 825,340 828,355 810,360", "515,445 545,437 545,455 520,460", "730,520 745,518 745,538 735,540", "930,610 955,605 958,625 938,630", "665,310 680,310 680,325 668,325", "355,640 385,630 380,648 358,652", "1150,590 1200,565 1205,585 1170,605", "785,635 805,628 800,655 785,650", "384,930 397,930 397,985 386,985", "1270,280 1284,290 1280,310", "1375,315 1392,318 1388,328", "860,490 890,492 885,500", "1085,580 1115,580 1105,598", "950,925 985,920 990,940 960,945",
];
const minorL = "M186 78V320L230 365L300 385L370 390M78 135L186 142M405 285L430 360L520 405M348 335L365 300M348 335L400 400L420 430M700 290V345L670 380L665 460M78 832L140 790L250 655L340 610L385 570M250 655L290 720V755L340 765L338 830L355 890L280 980M340 610L355 650L400 715L480 740L580 755L640 735M355 830L480 828L555 825M545 780L560 820L540 870L550 925M715 700L700 760L680 885M78 395L115 430L118 480L78 550M520 405L600 420L700 435L790 440M435 890L480 880L495 900L440 902M400 290L480 262M620 290H700M990 480L985 540L1020 620M1010 78L1030 130L960 200M560 870L700 800";
const minorR = "M985 170L1070 215L1090 270L1240 300M800 230L850 255L870 245M1070 405L1120 350L1240 280M880 78L810 90L790 240M560 550L640 700L680 770M540 720L560 900L580 960M640 620L740 680L810 700M800 610L900 640M900 560L950 600L1040 660L1080 620L1130 600M1240 300L1330 280L1425 235M1360 350L1425 400M720 900L740 700M460 590L560 610M590 960L720 830M30 810L150 960M60 150L160 180M870 960L1080 970M985 990L1010 780M1100 760L1210 840L1200 980M1185 240L1230 78M1270 240L1425 330M1380 630L1425 620M550 985L650 880";
const majorL = "M78 415L150 380L200 350L300 260M78 550L95 542H185L235 522L305 467L380 465H530M510 475L575 497L650 488M735 460L800 472L825 475L845 455L930 445L960 455L1000 490L1185 558M710 268L700 287L650 295L600 365L540 420L510 480L505 510L480 570L455 650L425 960L410 1037M385 570L420 553H455L480 572L520 585L545 640L580 680L810 832M710 268L780 300L865 338L920 345L930 370L960 420L970 440L1030 480L1100 498L1140 485L1190 515L1240 530M810 310L820 355L785 420L797 480L795 540L778 600L780 710L808 790L812 845M310 78L335 120M545 78L505 120M640 78L645 105L655 120M760 78L830 105L860 125L885 78M775 150L790 130L830 140L860 125M1195 78L1145 160L1110 265L1055 340H1025V365M1330 78L1245 150L1235 200L1210 260L1150 335L1130 390M1195 78L1200 125L1245 150M1120 410L1160 450L1180 520L1210 590L1215 710L1175 760L1165 870L1150 930L1130 980L1060 1037M1440 455L1390 505L1385 600L1360 670L1275 735L1175 775M1230 735H1360L1440 765M1275 735L1270 775L1310 830L1305 920L1275 950L1265 1037M1175 760L1110 820L1105 860L1020 1037M1150 940L1270 945L1360 975L1440 980M1300 920L1340 930L1440 920M835 885L855 875L935 915L1045 980H1090L1120 960M835 885L840 960L865 1037M1440 410L1410 425";
const trunkL = "M265 1037L455 965L680 885L870 835L960 865L1105 858L1165 870";
const majorR = "M35 425L60 410L170 415L185 395L245 370L260 330L300 325M365 430L400 395L470 360M300 310L335 275L380 270L440 240L445 190M660 235L590 270L580 315L545 350V390L570 465L605 550L580 580V610L620 630L595 720V780L625 830M605 78L550 130L495 165L492 240M645 78L680 100L715 180L745 230L737 350L780 430L785 490L820 550L805 600L815 720L850 850L870 1037M690 78L705 110L680 180L670 235M1015 78L980 150L970 220L1005 330L1020 370L1022 540L1065 570L1090 640L1095 680L1080 740M1270 78L1425 135M270 580L335 545M420 533H500L610 572L670 575L730 545L830 510L860 540L890 525M970 540L1000 547M628 575V635M725 750L850 720H900L960 755L1020 770L1040 755M270 790L335 830L385 825L450 855L545 925L575 960L585 990M450 855L620 800L700 770M240 850V910L215 985M0 930L100 895L220 880L260 860L270 790M1095 680L1240 725M1135 690L1290 565V520M1165 710L1175 1037M1390 385L1425 375M1390 508H1425M1390 755L1425 750M1390 805L1425 835M0 980L45 985L80 1037M205 710L205 745L220 780L215 830M230 575H300M785 490L800 530L840 520";
const trunkR = "M180 78L190 130L170 215L140 300L130 350L95 385L90 450L60 455L15 500L10 530M200 78L235 150L250 200L300 290V380L295 450L300 520L305 580L280 660L265 720L205 745L130 745L50 765M190 78L215 78M135 535L240 490L340 435H420L480 470L510 490L570 465L720 470L780 490L830 485L920 435L1000 447L1100 415L1180 440H1240M80 625L100 630L125 658L240 665L300 690L335 700L385 695L420 722L490 705M730 705L820 715L890 740L960 775L1100 805L1240 770M345 760L350 800L375 845L450 905L550 985M300 580L320 605";

const shields = [
  ["R24", 549, 271], ["M47", 941, 194], ["M71", 1370, 135], ["M81", 1384, 183], ["M47", 1054, 316], ["M5", 1257, 369], ["R41", 884, 457], ["R41", 690, 475], ["R28", 466, 609], ["R559", 585, 691], ["R93", 556, 766], ["M70", 1344, 637],
  ["M9", 1479, 129], ["R25", 1953, 105], ["R23", 2123, 261], ["M44", 2294, 310], ["R51", 2367, 265], ["M11", 1549, 341], ["M16", 1565, 440], ["R23", 2145, 420], ["R29", 1756, 533], ["M43", 2092, 573], ["R29", 2306, 537], ["R51", 2419, 548], ["R554", 2051, 781], ["M53", 1881, 811], ["R21", 2013, 852],
  ["", 1714, 64], ["", 2570, 1052], ["R21", 1918, 393, 1], ["R59", 1602, 828, 1],
];
const pentagons = [["14", 119, 397], ["12", 1002, 866], ["1", 1135, 954], ["12", 1403, 752], ["12", 1831, 446], ["3", 1726, 734]];
const BIG = 55;
const SMALL = 46;
const places = [
  ["dorp", 742, 200, 112, BIG, 500], ["Avalonia AH", 153, 300, 245, SMALL], ["Randburg", 1113, 234, 190, SMALL], ["Roodepoort", 899, 406, 292, BIG, 500], ["Randfontein", 378, 473, 242, SMALL],
  ["Johannesburg", 1170, 588, 478, 71, 500], ["Diepkloof", 1084, 694, 190, SMALL], ["Soweto", 823, 714, 187, BIG, 500], ["Pimville", 973, 769, 156, SMALL], ["Johannesburg", 1132, 834, 361, BIG, 500], ["South", 1238, 890, 145, BIG, 500],
  ["Lenasia", 853, 964, 155, SMALL], ["Westonaria", 312, 994, 222, SMALL], ["Sandton", 1445, 235, 208, BIG, 500], ["Kempton Park", 1782, 225, 282, SMALL], ["Edenvale", 1712, 350, 180, SMALL], ["Benoni", 2233, 416, 174, BIG, 500], ["Sentra", 2487, 221, 128, SMALL],
  ["B", 2587, 437, 28, SMALL], ["Boksburg", 1866, 718, 238, BIG, 500], ["Springs", 2420, 760, 192, BIG, 500], ["Brakpan", 2125, 855, 206, BIG, 500], ["Alberton", 1547, 938, 213, BIG, 500], ["La", 2773, 719, 46, SMALL],
];
const shift = (dx) => `translate(${dx} 0)`;
const Polys = ({ list, fill, dx = 0 }) => <g fill={fill} transform={shift(dx)}>{list.map((p, i) => <polygon key={i} points={p} />)}</g>;

const MESH_A = streetMesh(830, 100, 2300, 1030, 52, 7, 0.62);
const MESH_B = streetMesh(1100, 90, 1700, 980, 33, 21, 0.4);
const MESH_C = streetMesh(880, 560, 1200, 800, 30, 33, 0.5);
const MESH_D = streetMesh(2250, 600, 2640, 1000, 42, 12, 0.45);

const MapDrawing = () => (
  <svg width="909" height="320" viewBox="78 78 2727 960">
    <rect x="78" y="78" width="2727" height="960" fill="#f8f8f8" />
    <Polys list={landL} fill="#f5f0e5" /><Polys list={landR} fill="#f5f0e5" dx={1380} />
    <Polys list={townL} fill="#f8f8f8" /><Polys list={townR} fill="#f8f8f8" dx={1380} />
    <Polys list={greenL} fill="#d3f8e2" /><Polys list={greenR} fill="#d3f8e2" dx={1380} />
    <path d={specks(840, 100, 2600, 1000, 56, 5, 18)} fill="#d3f8e2" />
    <path d={specks(1000, 100, 2700, 1000, 40, 91, 16)} fill="#f5f0e5" />
    <Polys list={waterL} fill="#90daee" /><Polys list={waterR} fill="#90daee" dx={1380} />
    <path d={specks(120, 400, 1200, 1000, 24, 11, 7)} fill="#90daee" />
    <path d={specks(1600, 90, 2780, 1000, 60, 77, 7)} fill="#90daee" />
    <g fill="none" strokeLinejoin="round" strokeLinecap="round">
      <path d={MESH_A + MESH_B + MESH_C + MESH_D} stroke="#d7dfe9" strokeWidth="3" />
      <g stroke="#bcc6d6" strokeWidth="3.500"><path d={minorL} /><path d={minorR} transform={shift(1380)} /></g>
      <g stroke="#8198c4" strokeWidth="8"><path d={majorL} /><path d={majorR} transform={shift(1380)} /></g>
      <g stroke="#8198c4" strokeWidth="10"><path d={trunkL} /><path d={trunkR} transform={shift(1380)} /></g>
      <g stroke="#a3b5d8" strokeWidth="3.500"><path d={majorL} /><path d={majorR} transform={shift(1380)} /></g>
      <g stroke="#a3b5d8" strokeWidth="5.500"><path d={trunkL} /><path d={trunkR} transform={shift(1380)} /></g>
      <path d="M2790 80L2740 180L2655 320L2735 375M2773 460L2765 625L2805 635" stroke="#6a6a6a" strokeWidth="2.500" strokeDasharray="8 6" strokeLinecap="butt" />
    </g>
    <g fontFamily="Roboto, sans-serif" fontWeight="700" textAnchor="middle">
      {shields.map(([t, x, y, blue], i) => {
        const w = t === "" ? 92 : t.length === 4 ? 102 : t === "M9" || t === "M5" ? 72 : t[0] === "M" ? 92 : 84;
        return (
          <g key={i}>
            <rect x={x - w / 2} y={y - 21} width={w} height="41" fill={blue ? "#3a76c9" : "#679a40"} />
            <text x={x} y={y + 12} fontSize="34" fill="#ffe047">{t}</text>
          </g>
        );
      })}
      {pentagons.map(([t, x, y], i) => (
        <g key={i}>
          <path d={`M${x - 25} ${y - 18}L${x} ${y - 27}L${x + 25} ${y - 18}L${x + 31} ${y - 8}L${x + 24} ${y + 25}H${x - 24}L${x - 31} ${y - 8}Z`} fill="#3a76c9" />
          <text x={x} y={y + 12} fontSize="34" fill="#fff">{t}</text>
        </g>
      ))}
    </g>
    <g fontFamily="Roboto, sans-serif" stroke="#fff" strokeWidth="9" strokeLinejoin="round" paintOrder="stroke">
      {places.map(([t, x, y, w, size, weight], i) => (
        <text key={i} x={x} y={y} fontSize={size} fontWeight={weight || 400} textLength={w} lengthAdjust="spacingAndGlyphs" fill={weight ? "#262a30" : "#3f4347"}>{t}</text>
      ))}
    </g>
    <text x="1625" y="1050" fontFamily="Roboto, sans-serif" fontSize="43" textLength="202" fill="#777">Katlehong</text>
  </svg>
);

const Pegman = () => (
  <S w={21} h={37}><circle cx="10.500" cy="6.500" r="6.300" fill="#fbbc2c" stroke="#d98f17" strokeWidth=".7" /><path d="M5 12.500H16Q18 12.500 18.500 15L20.500 25 18 26.500 15.800 20V36.500H11V27H10V36.500H5.200V20L3 26.500.5 25 2.500 15Q3 12.500 5 12.500Z" fill="#fbb829" stroke="#d98f17" strokeWidth=".6" /><path d="M7 12.500H14L10.500 19Z" fill="#e0701c" /></S>
);

const GoogleMap = () => (
  <MapCard>
    <MapDrawing />
    <MapType><MapTypeItem $on>Map</MapTypeItem><MapTypeItem>Satellite</MapTypeItem></MapType>
    <MapButton $top={13}><S w={22}><path d="M1.500 7.500V1.500H7.500M14.500 1.500H20.500V7.500M20.500 14.500V20.500H14.500M7.500 20.500H1.500V14.500" stroke="#5f5f5f" strokeWidth="3" /></S></MapButton>
    <MapButton $top={99}><Pegman /></MapButton>
    <MapButton $top={189} $h={101}>
      <S w={22}><path d="M11 0V22M0 11H22" stroke="#666" strokeWidth="4.600" /></S>
      <Rule />
      <S w={22}><path d="M0 11H22" stroke="#666" strokeWidth="4.600" /></S>
    </MapButton>
    <GoogleMark><Ink $c="#4285f4">G</Ink><Ink $c="#ea4335">o</Ink><Ink $c="#fbbc04">o</Ink><Ink $c="#4285f4">g</Ink><Ink $c="#34a853">l</Ink><Ink $c="#ea4335">e</Ink></GoogleMark>
    <Attribution><span>Keyboard shortcuts</span><span>Map data ©2024 AfriGIS (Pty) Ltd</span><span>Terms</span><span>Report a map error</span></Attribution>
  </MapCard>
);

/* ---------- browser window ---------- */
const BrowserWindow = ({ active, path, children }) => (
  <WindowFrame $active={active}>
    <TabStrip $active={active}>
      <TabSearch $active={active}><S w={11} h={8}><path d="M1 1.500 5.500 6 10 1.500" stroke="#111" strokeWidth="2.400" /></S></TabSearch>
      <Tab $active={active}>
        <Favicon />
        <TabTitle>Pack It Buddy</TabTitle>
        <S w={11}><path d="M1 1 10 10M10 1 1 10" stroke="#111" strokeWidth="2" /></S>
      </Tab>
      <NewTab $active={active}><S w={13}><path d="M6.500 0V13M0 6.500H13" {...line} /></S></NewTab>
      <Controls $active={active}>
        <S w={13}><path d="M0 6.500H13" stroke="currentColor" /></S>
        <S w={14}><rect x=".75" y=".75" width="12.500" height="12.500" rx="1.500" stroke="currentColor" strokeWidth="1.200" /></S>
        <S w={14}><path d="M.5.5 13.500 13.500M13.500.5.5 13.500" stroke="currentColor" strokeWidth="1.200" /></S>
      </Controls>
    </TabStrip>
    <Toolbar>
      <NavButtons>
        <S w={24}><path {...line} d="M19 12H5.500M12 5 5 12 12 19" /></S>
        <S w={24}><g opacity=".45"><path {...line} d="M5 12H18.500M12 5 19 12 12 19" /></g></S>
        <S w={24}><path {...line} d="M18.500 8.500A7 7 0 1 0 19 13.500" /><path d="M19.800 4.500V11H13.300Z" fill="currentColor" /></S>
      </NavButtons>
      <AddressBar>
        <SiteInfo><S w={18}><circle cx="9" cy="9" r="7.600" stroke="#2b2d30" strokeWidth="1.800" /><path d="M9 8V13M9 5V6.600" stroke="#2b2d30" strokeWidth="1.800" /></S></SiteInfo>
        <Url><b>localhost</b>:3000/{path}</Url>
        <StarIcon />
      </AddressBar>
      <ToolGroup>
        <PuzzleIcon /><Divider /><HistoryIcon /><Divider /><Profile>T</Profile>
        <S w={18} h={20}><circle cx="9.500" cy="2.500" r="2" fill="currentColor" /><circle cx="9.500" cy="9.500" r="2" fill="currentColor" /><circle cx="9.500" cy="16.500" r="2" fill="currentColor" /></S>
      </ToolGroup>
    </Toolbar>
    <BookmarkBar>
      <Bookmark $w={196} $gap={7} $ls="0.07px"><TailwindIcon />Install Tailwind CSS...</Bookmark>
      <Bookmark $w={189}><ResumeIcon />Resume Builder | Re...</Bookmark>
      <Bookmark $w={180} $ls="0.1px"><PortfolioIcon />One Portfolio - Getf...</Bookmark>
      <BookmarkEnd>
        <S w={12} h={10}><path d="M1 1 5 5 1 9M7 1 11 5 7 9" stroke="#555" strokeWidth="1.800" /></S>
        <Spacer $w={22} /><Divider /><Spacer $w={20} />
        <Bookmark $gap={9} $w={126} $ls="0.03px"><FolderIcon />All Bookmarks</Bookmark>
      </BookmarkEnd>
    </BookmarkBar>
    {children}
  </WindowFrame>
);

const apps = [
  { icon: <WindowsIcon /> }, { icon: <SearchIcon /> }, { icon: <CopilotIcon /> }, { icon: <ExplorerIcon />, run: 1 }, { icon: <StoreIcon /> },
  { icon: <ChromeIcon />, tile: "active" },
  { icon: <Office c="#2b579a" dark="#24539f" letter="W" kind="lines" />, run: 1 },
  { icon: <Office c="#207245" dark="#1c7043" letter="X" kind="grid" /> },
  { icon: <Office c="#d24726" dark="#d24625" letter="P" kind="pie" /> },
  { icon: <Office c="#0072c6" dark="#0173c7" letter="O" kind="mail" /> },
  { icon: <Office c="#80397b" dark="#7d3878" letter="N" kind="note" /> },
  { icon: <Office c="#a4373a" dark="#a33639" letter="A" kind="db" /> },
  { icon: <Office c="#077568" dark="#077568" letter="P" kind="pub" /> },
  { icon: <WhatsAppIcon />, tile: "alert" },
  { icon: <BraveIcon /> }, { icon: <SublimeIcon /> }, { icon: <SpotifyIcon />, run: 1 }, { icon: <TorrentIcon />, run: 1 }, { icon: <VlcIcon />, run: 1 }, { icon: <TerminalIcon />, run: 1 }, { icon: <VsCodeIcon />, run: 1 },
];

export default function App() {
  return (
    <Desktop>
      <GlobalStyle />
      <Windows>
        <BrowserWindow path="DriverHome">
          <Viewport $both>
            <DriverPage>
              <Navbar>
                <LogoLink><PackLogo /></LogoLink>
                <UserBadge><S w={24}><circle cx="12" cy="6.300" r="6" fill="#000" /><path d="M0 24V20Q0 14.500 7 14.500H17Q24 14.500 24 20V24Z" fill="#000" /></S></UserBadge>
                <Burger><span /><span /><span /></Burger>
              </Navbar>
              <DriverBody>
                <GoogleMap />
                <Loading>Loading ride details...</Loading>
              </DriverBody>
            </DriverPage>
            <VTrack $pb={9}><Arrow $dir="up" $c="#a3a3a3" /><VRail $top={7}><VThumb $h={691} /></VRail><Arrow $dir="down" $c="#505050" /></VTrack>
            <HTrack><Arrow $dir="left" $c="#a3a3a3" /><HRail><HThumb /></HRail><Arrow $dir="right" $c="#505050" /></HTrack>
            <Corner />
          </Viewport>
        </BrowserWindow>
        <BrowserWindow active path="getquote">
          <Viewport>
            <QuotePage>
              <Card>
                <Title>Get Quote</Title>
                <Price>Total price: R569.11</Price>
                <Label $ls="0.15px">Weight of Consignment (kg)</Label><Field>91</Field>
                <Label $ls="-0.15px">Full Name</Label><Field $filled $ls="-0.08px">Tebatso Moyaba</Field>
                <Label>Email</Label><Field $filled>tebatsomoyaba@gmail.com</Field>
                <Label>Phone</Label><Field $filled $ls="-0.05px">0814493356</Field>
                <Label $ls="0.01px">Estimated Moving Date</Label>
                <Field $h={55} $ls="0.6px" $pl={11}>2024/10/09<S w={22} h={22}><path d="M2.500 4H16.500V18.500H2.500Z" stroke="#000" strokeWidth="1.800" /><path d="M1.600 3H17.400V8H1.600ZM4 1H6V4H4ZM13 1H15V4H13Z" fill="#000" /></S></Field>
                <Label $ls="-0.17px">Package Description</Label>
                <Field $h={82} $mb={27} $area>
                  Fridge
                  <Assistant>
                    <S w={20} h={24}><path d="M10 0A9.500 9.500 0 0 1 14.500 17.700V18H5.500V17.700A9.500 9.500 0 0 1 10 0Z" fill="#07a88a" /><path d="M5 20H15V21Q15 23.500 12.500 23.500H7.500Q5 23.500 5 21Z" fill="#07a88a" /><path d="M10 3.500 11.700 7.800 16 9.500 11.700 11.200 10 15.500 8.300 11.200 4 9.500 8.300 7.800Z" fill="#fff" /></S>
                    <S w={28}><path d="M0 14A14 14 0 1 1 14 28H0Z" fill="#0b7c6c" /><circle cx="14" cy="14" r="9" stroke="#3b998c" strokeWidth="1.600" /><path d="M17 5.500A9 9 0 0 1 15 23" stroke="#bfe0da" strokeWidth="1.600" /></S>
                  </Assistant>
                  <Grip><S w={11} h={11}><path d="M1 10 10 1M6 10 10 6" stroke="#444" strokeWidth="1.300" /></S></Grip>
                </Field>
                <Checkout>Proceed to checkout</Checkout>
              </Card>
            </QuotePage>
            <VTrack $pb={7}><Arrow $dir="up" $c="#505050" /><VRail $top={148}><VThumb $h={667} /></VRail><Arrow $dir="down" $c="#505050" /></VTrack>
          </Viewport>
        </BrowserWindow>
      </Windows>
      <Taskbar>
        <Apps>
          {apps.map((a, i) => (
            <Slot key={i}>
              {a.tile ? <Tile $alert={a.tile === "alert"}>{a.icon}</Tile> : a.icon}
              {a.tile === "active" && <><Badge>T</Badge><Running $c="#0078d4" $w={20} /></>}
              {a.tile === "alert" && <Running $c="#c42b1c" />}
              {a.run && <Running />}
            </Slot>
          ))}
        </Apps>
        <Tray>
          <S w={14} h={8}><path d="M1 7.500 7 1.500 13 7.500" stroke="#1b1b1b" strokeWidth="1.700" /></S>
          <TrayText $w={74} $ml={4} $align="center" $ls="0">ENG<br />US</TrayText>
          <S w={20} h={15}><path d="M1 5.500A12.800 12.800 0 0 1 19 5.500M3.500 8.500A9.200 9.200 0 0 1 16.500 8.500M6 11.300A5.600 5.600 0 0 1 14 11.300" stroke="#1b1b1b" strokeWidth="1.300" /><circle cx="10" cy="13.500" r="1.800" fill="#1b1b1b" /></S>
          <Spacer $w={10} />
          <S w={20} h={16}><path d="M1 5H4.500L8.500 1.200V14.800L4.500 11H1Z" stroke="#1b1b1b" strokeWidth="1.300" strokeLinejoin="round" /><path d="M11 5.500Q12.500 8 11 10.500M13.500 3.500Q16.500 8 13.500 12.500" stroke="#1b1b1b" strokeWidth="1.300" /><path d="M16.500 1.500Q20.500 8 16.500 14.500" stroke="#a9a3a6" strokeWidth="1.300" /></S>
          <Spacer $w={10} />
          <S w={21} h={16}><rect x="1.500" y="4" width="16" height="10.500" rx="2" stroke="#1b1b1b" strokeWidth="1.400" /><rect x="3.500" y="6" width="12" height="6.500" fill="#1b1b1b" /><rect x="18" y="7" width="2.500" height="4.500" rx="1" fill="#1b1b1b" /><path d="M4.500 0 0 6H2.500L1.500 10.500 6.500 4.300H3.800Z" fill="#1b1b1b" stroke="#e7dfe5" strokeWidth=".7" /></S>
          <TrayText $w={97} $align="right" $ls="0">17:01<br />2024/10/09</TrayText>
          <Spacer $w={10} />
          <S w={17} h={19}><path d="M2.500 13V7.500A6 6 0 0 1 14.500 7.500V13L16 15H1ZM6 15.500A2.500 2.500 0 0 0 11 15.500" stroke="#1b1b1b" strokeWidth="1.300" strokeLinejoin="round" /></S>
        </Tray>
      </Taskbar>
    </Desktop>
  );
}
